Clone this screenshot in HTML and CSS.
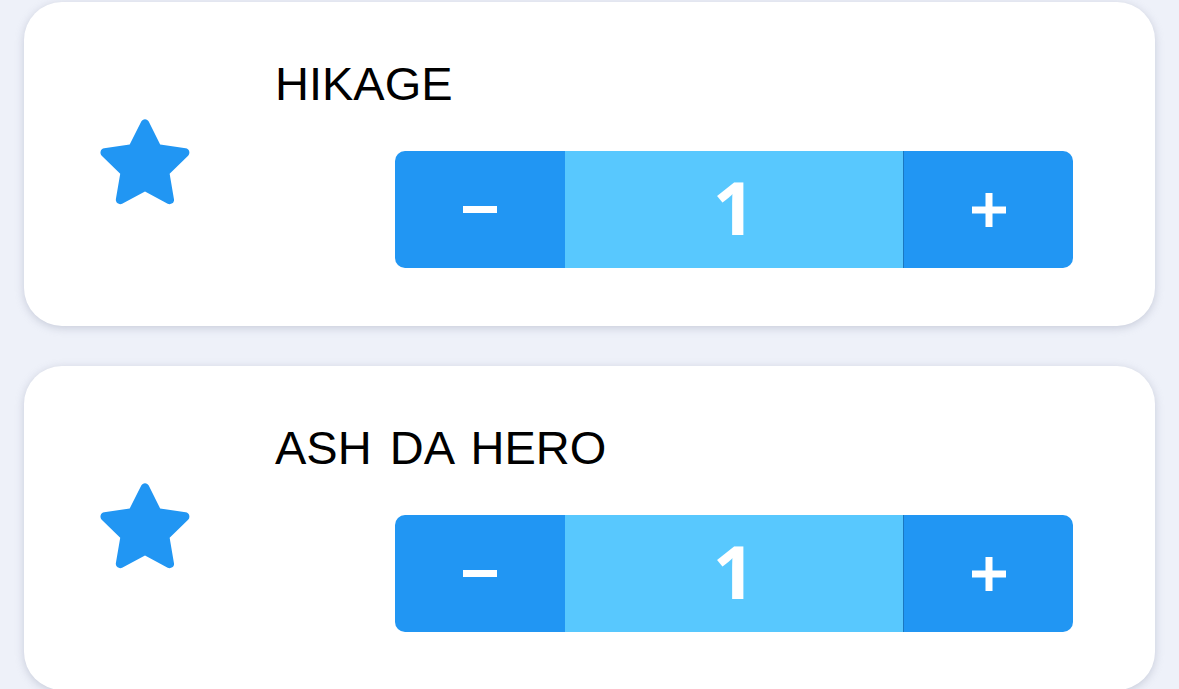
FILE: index.html
```html
<!DOCTYPE html>
<html>
<head>
<meta charset="utf-8">
<link rel="stylesheet" href="styles.css">
</head>
<body>
<div class="list">
  <div class="card">
    <div class="star-col">
      <svg class="star" viewBox="0 0 24 24"><path d="M12 2.6c.35 0 .66.2.8.5l2.45 4.96 5.47.8c.35.05.64.3.75.63.1.34.02.7-.23.95l-3.96 3.86.93 5.45c.06.35-.08.7-.37.9-.29.2-.67.23-.98.07L12 18.130l-4.9 2.58c-.3.16-.68.14-.97-.07-.29-.2-.43-.55-.37-.9l.93-5.45-3.96-3.86c-.25-.25-.34-.61-.23-.95.1-.33.4-.58.75-.63l5.47-.8L11.2 3.1c.14-.3.45-.5.8-.5z"/></svg>
    </div>
    <div class="content">
      <div class="title">HIKAGE</div>
      <div class="stepper">
        <div class="btn minus"><span class="bar"></span></div>
        <div class="value">1</div>
        <div class="btn plus"><span class="bar"></span><span class="bar v"></span></div>
      </div>
    </div>
  </div>
  <div class="card">
    <div class="star-col">
      <svg class="star" viewBox="0 0 24 24"><path d="M12 2.6c.35 0 .66.2.8.5l2.45 4.96 5.47.8c.35.05.64.3.75.63.1.34.02.7-.23.95l-3.96 3.86.93 5.45c.06.35-.08.7-.37.9-.29.2-.67.23-.98.07L12 18.13l-4.9 2.58c-.3.16-.68.14-.97-.07-.29-.2-.43-.55-.37-.9l.93-5.45-3.96-3.86c-.25-.25-.34-.61-.23-.95.1-.33.4-.58.75-.63l5.47-.8L11.2 3.1c.14-.3.45-.5.8-.5z"/></svg>
    </div>
    <div class="content">
      <div class="title">ASH DA HERO</div>
      <div class="stepper">
        <div class="btn minus"><span class="bar"></span></div>
        <div class="value">1</div>
        <div class="btn plus"><span class="bar"></span><span class="bar v"></span></div>
      </div>
    </div>
  </div>
</div>
</body>
</html>
```

FILE: styles.css
```css
html, body {
  margin: 0;
  padding: 0;
  background: #eef1f9;
  overflow: hidden;
}
body {
  width: 1179px;
  height: 689px;
}
.list {
  display: flex;
  flex-direction: column;
  gap: 40px;
  padding: 2px 24px 0 24px;
}
.card {
  background: #ffffff;
  border-radius: 38px;
  height: 324px;
  box-shadow: 0 2px 8px rgba(150, 158, 180, 0.45);
  display: flex;
  align-items: stretch;
  box-sizing: border-box;
}
.star-col {
  width: 252px;
  display: flex;
  align-items: center;
  justify-content: center;
  padding-bottom: 2px;
  box-sizing: border-box;
}
.star {
  width: 112px;
  height: 112px;
  fill: #2196f3;
  margin-left: -10px;
}
.content {
  flex: 1;
  display: flex;
  flex-direction: column;
  padding: 50px 82px 0 0;
}
.title {
  font-family: "Liberation Sans", Arial, sans-serif;
  font-size: 47px;
  line-height: 64px;
  word-spacing: 5px;
  color: #000;
  margin-left: -1px;
}
.stepper {
  align-self: flex-end;
  width: 678px;
  height: 117px;
  margin-top: 35px;
  display: flex;
  border-radius: 10px;
  overflow: hidden;
}
.btn {
  width: 170px;
  background: #2196f3;
  position: relative;
  display: flex;
  align-items: center;
  justify-content: center;
}
.btn.plus {
  border-left: 1px solid #1b78c0;
  width: 169px;
}
.bar {
  display: block;
  width: 34px;
  height: 7px;
  background: #fff;
}
.plus .bar {
  position: absolute;
  left: 50%;
  top: 50%;
  transform: translate(-50%, -50%);
}
.plus .bar.v {
  width: 7px;
  height: 34px;
}
.value {
  flex: 1;
  background: #58c8fe;
  color: #fff;
  font-family: "Open Sans", "Liberation Sans", sans-serif;
  font-weight: 700;
  font-size: 74px;
  display: flex;
  align-items: center;
  justify-content: center;
  padding-bottom: 6px;
}
```
